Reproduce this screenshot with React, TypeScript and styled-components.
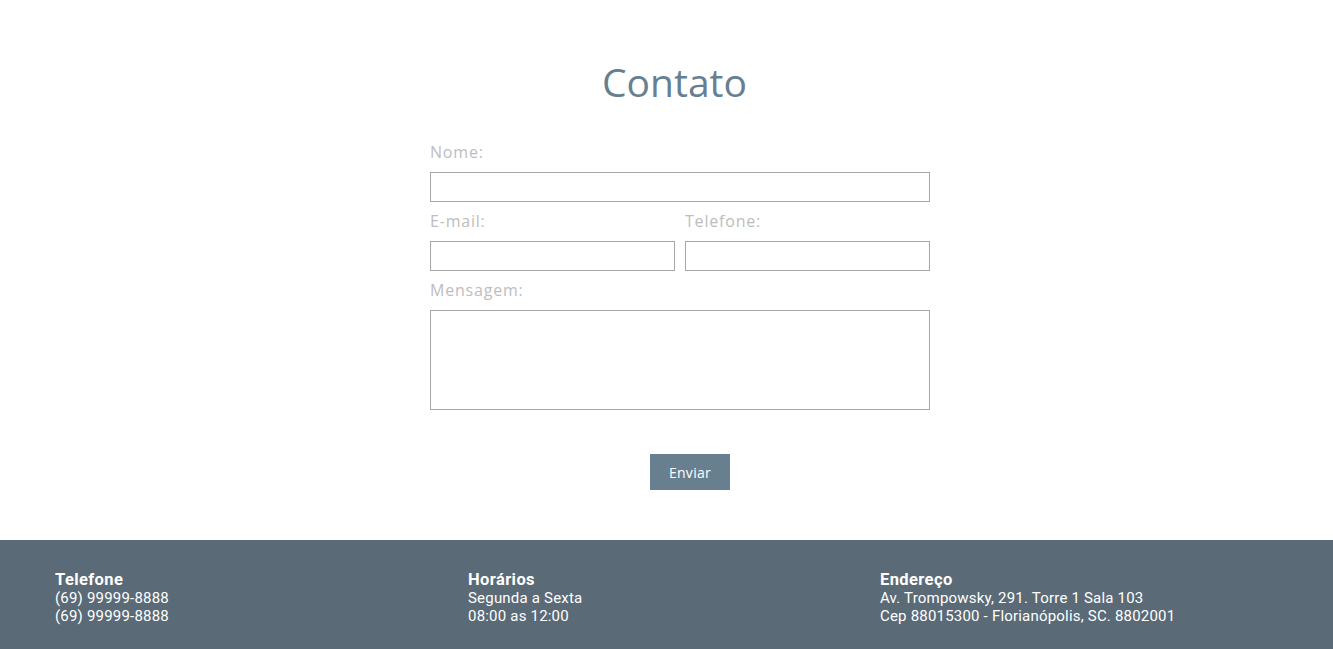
import React from "react";
import styled, { createGlobalStyle } from "styled-components";

const Global = createGlobalStyle`
  html, body { margin: 0; padding: 0; background: #fff; }
  body { font-family: "Open Sans", "Noto Sans", sans-serif; }
  * { box-sizing: border-box; }
`;

const Section = styled.section`
  padding: 59px 0 50px 27px;
  display: flex;
  flex-direction: column;
  align-items: center;
`;

const Title = styled.h1`
  margin: 0 11px 28px 0;
  font-size: 39px;
  line-height: 46px;
  font-weight: 500;
  color: #677f90;
  text-align: center;
`;

const Form = styled.form`
  width: 500px;
  display: flex;
  flex-direction: column;
`;

const Row = styled.div`
  display: grid;
  grid-template-columns: 1fr 1fr;
  column-gap: 10px;
`;

const Field = styled.div`
  display: flex;
  flex-direction: column;
`;

const Label = styled.label`
  display: block;
  margin: 9px 0 10px;
  font-size: 16px;
  line-height: 20px;
  letter-spacing: 0.8px;
  color: #bdbdbd;
  font-weight: 400;
`;

const Input = styled.input`
  display: block;
  width: 100%;
  height: 30px;
  border: 1px solid #a7a7a7;
  background: #fff;
  margin: 0;
  outline: none;
`;

const TextArea = styled.textarea`
  display: block;
  width: 100%;
  height: 100px;
  border: 1px solid #a7a7a7;
  background: #fff;
  margin: 0;
  resize: none;
  outline: none;
`;

const Button = styled.button`
  align-self: center;
  margin: 44px 0 0 20px;
  width: 80px;
  height: 36px;
  border: none;
  background: #677f8f;
  color: #fff;
  font-family: "Open Sans", sans-serif;
  font-size: 14px;
  letter-spacing: 0.3px;
  cursor: pointer;
`;

const Footer = styled.footer`
  background: #5a6a76;
  padding: 31px 0 24px 55px;
  display: grid;
  grid-template-columns: 413px 412px 412px;
  color: #fff;
  font-family: Roboto, "Open Sans", sans-serif;
`;

const Col = styled.div`
  font-size: 15px;
  line-height: 18px;
  letter-spacing: 0.2px;
`;

const ColTitle = styled.div`
  font-weight: 700;
  font-size: 16.5px;
  letter-spacing: 0.4px;
`;

const Line = styled.div``;

export default function App() {
  return (
    <>
      <Global />
      <Section>
        <Title>Contato</Title>
        <Form onSubmit={(e) => e.preventDefault()}>
          <Field>
            <Label>Nome:</Label>
            <Input type="text" />
          </Field>
          <Row>
            <Field>
              <Label>E-mail:</Label>
              <Input type="email" />
            </Field>
            <Field>
              <Label>Telefone:</Label>
              <Input type="tel" />
            </Field>
          </Row>
          <Field>
            <Label>Mensagem:</Label>
            <TextArea />
          </Field>
          <Button type="submit">Enviar</Button>
        </Form>
      </Section>
      <Footer>
        <Col>
          <ColTitle>Telefone</ColTitle>
          <Line>(69) 99999-8888</Line>
          <Line>(69) 99999-8888</Line>
        </Col>
        <Col>
          <ColTitle>Horários</ColTitle>
          <Line>Segunda a Sexta</Line>
          <Line>08:00 as 12:00</Line>
        </Col>
        <Col>
          <ColTitle>Endereço</ColTitle>
          <Line>Av. Trompowsky, 291. Torre 1 Sala 103</Line>
          <Line>Cep 88015300 - Florianópolis, SC. 8802001</Line>
        </Col>
      </Footer>
    </>
  );
}
